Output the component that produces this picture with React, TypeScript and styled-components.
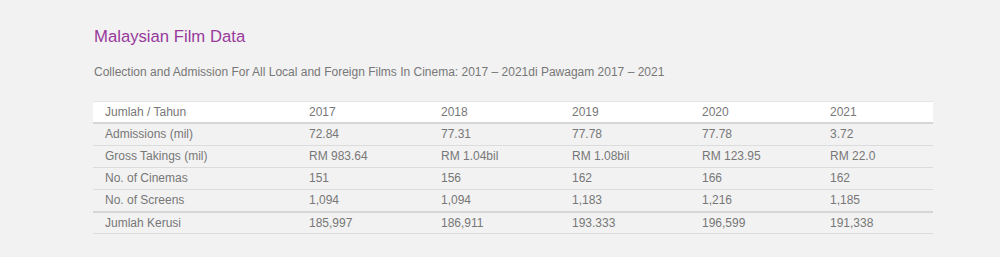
import styled, { createGlobalStyle } from "styled-components";

interface FilmRow {
  label: string;
  values: string[];
}

const years = ["2017", "2018", "2019", "2020", "2021"];

const rows: FilmRow[] = [
  { label: "Admissions (mil)", values: ["72.84", "77.31", "77.78", "77.78", "3.72"] },
  {
    label: "Gross Takings (mil)",
    values: ["RM 983.64", "RM 1.04bil", "RM 1.08bil", "RM 123.95", "RM 22.0"],
  },
  { label: "No. of Cinemas", values: ["151", "156", "162", "166", "162"] },
  { label: "No. of Screens", values: ["1,094", "1,094", "1,183", "1,216", "1,185"] },
];

const footer: FilmRow = {
  label: "Jumlah Kerusi",
  values: ["185,997", "186,911", "193.333", "196,599", "191,338"],
};

const colWidths = [204, 132, 131, 130, 128, 115];

const GlobalStyle = createGlobalStyle`
  body {
    margin: 0;
    background: #f2f2f2;
    font-family: "Liberation Sans", Arial, sans-serif;
  }
`;

const Container = styled.div`
  padding: 27px 67px 0 93px;
`;

const Title = styled.h2`
  margin: 0 0 0 1px;
  font-size: 16.7px;
  line-height: 20px;
  font-weight: normal;
  color: #973a9b;
`;

const Subtitle = styled.p`
  margin: 18px 0 21px 1px;
  font-size: 12px;
  line-height: 15px;
  color: #777;
`;

const Table = styled.table`
  width: 840px;
  border-collapse: collapse;
  table-layout: fixed;
  font-size: 12px;
  color: #777;
`;

const HeadRow = styled.tr`
  background: #fff;
  border-top: 1px solid #e4e4e4;
  border-bottom: 2px solid #d6d6d6;
`;

const BodyRow = styled.tr<{ $strong?: boolean }>`
  border-top: ${(p) => (p.$strong ? "2px solid #d6d6d6" : "1px solid #dcdcdc")};
  border-bottom: 1px solid #dcdcdc;
`;

const Cell = styled.td<{ $tight?: boolean }>`
  height: ${(p) => (p.$tight ? 20 : 21)}px;
  padding: 0 0 0 12px;
  line-height: 15px;
  text-align: left;
  font-weight: normal;
  vertical-align: middle;
  white-space: nowrap;
`;

function App() {
  return (
    <Container>
      <GlobalStyle />
      <Title>Malaysian Film Data</Title>
      <Subtitle>
        Collection and Admission For All Local and Foreign Films In Cinema: 2017 – 2021di Pawagam 2017 – 2021
      </Subtitle>
      <Table>
        <colgroup>
          {colWidths.map((w, i) => (
            <col key={i} style={{ width: w }} />
          ))}
        </colgroup>
        <thead>
          <HeadRow>
            <Cell as="th" $tight>Jumlah / Tahun</Cell>
            {years.map((y) => (
              <Cell as="th" key={y} $tight>
                {y}
              </Cell>
            ))}
          </HeadRow>
        </thead>
        <tbody>
          {rows.map((r) => (
            <BodyRow key={r.label}>
              <Cell>{r.label}</Cell>
              {r.values.map((v, i) => (
                <Cell key={i}>{v}</Cell>
              ))}
            </BodyRow>
          ))}
        </tbody>
        <tfoot>
          <BodyRow $strong>
            <Cell $tight>{footer.label}</Cell>
            {footer.values.map((v, i) => (
              <Cell key={i} $tight>{v}</Cell>
            ))}
          </BodyRow>
        </tfoot>
      </Table>
    </Container>
  );
}

export default App;
